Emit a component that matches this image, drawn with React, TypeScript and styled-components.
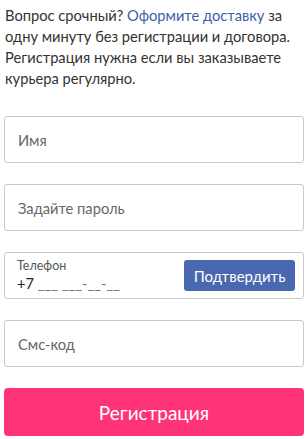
import React, { useState } from 'react';
import styled, { createGlobalStyle } from 'styled-components';

const Global = createGlobalStyle`
  body {
    margin: 0;
    background: #fff;
    font-family: Lato, "Open Sans", sans-serif;
  }
`;

const Page = styled.div`
  display: flex;
  flex-direction: column;
  padding: 0 3px 0 4px;
`;

const Intro = styled.p`
  margin: 5px 0 0 1px;
  font-size: 14.7px;
  line-height: 21px;
  color: #333;
`;

const Link = styled.a`
  color: #3f5ea8;
  text-decoration: none;
`;

const Fields = styled.div`
  display: flex;
  flex-direction: column;
  gap: 21px;
  margin-top: 27px;
`;

const Field = styled.label`
  display: flex;
  align-items: center;
  height: 47px;
  box-sizing: border-box;
  border: 1px solid #c9c9c9;
  border-radius: 3px;
  padding: 0 13px;
`;

const Input = styled.input`
  border: none;
  outline: none;
  width: 100%;
  font-family: inherit;
  font-size: 14.7px;
  color: #333;
  padding: 0;
  &::placeholder {
    color: #666;
  }
`;

const PhoneBox = styled(Field)`
  justify-content: space-between;
  padding: 0 8px 0 12px;
`;

const PhoneCol = styled.div`
  display: flex;
  flex-direction: column;
  gap: 1px;
  margin-top: -2px;
`;

const Small = styled.span`
  font-size: 12.5px;
  color: #555;
`;

const PhoneValue = styled.span`
  font-size: 14.7px;
  color: #222;
  white-space: pre;
`;

const Mask = styled.span`
  color: #777;
`;

const Confirm = styled.button`
  background: #4a68b0;
  color: #fff;
  border: none;
  border-radius: 3px;
  height: 31px;
  width: 111px;
  font-family: inherit;
  font-size: 15px;
  padding: 0;
`;

const Submit = styled.button`
  margin-top: 21px;
  height: 48px;
  border: none;
  border-radius: 4px;
  background: #ff3377;
  color: #fff;
  font-family: inherit;
  font-size: 19px;
`;

const App: React.FC = () => {
  const [name, setName] = useState('');
  const [pass, setPass] = useState('');
  const [code, setCode] = useState('');

  return (
    <Page>
      <Global />
      <Intro>
        Вопрос срочный? <Link href="#">Оформите доставку</Link> за одну минуту
        без регистрации и договора. Регистрация нужна если вы заказываете
        курьера регулярно.
      </Intro>
      <Fields>
        <Field>
          <Input placeholder="Имя" value={name} onChange={(e) => setName(e.target.value)} />
        </Field>
        <Field>
          <Input
            type="password"
            placeholder="Задайте пароль"
            value={pass}
            onChange={(e) => setPass(e.target.value)}
          />
        </Field>
        <PhoneBox>
          <PhoneCol>
            <Small>Телефон</Small>
            <PhoneValue>
              +7 <Mask>___ ___-__-__</Mask>
            </PhoneValue>
          </PhoneCol>
          <Confirm type="button">Подтвердить</Confirm>
        </PhoneBox>
        <Field>
          <Input placeholder="Смс-код" value={code} onChange={(e) => setCode(e.target.value)} />
        </Field>
      </Fields>
      <Submit type="button">Регистрация</Submit>
    </Page>
  );
};

export default App;
